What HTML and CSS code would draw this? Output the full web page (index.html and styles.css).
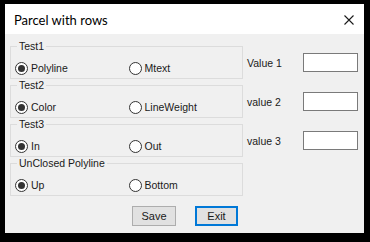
FILE: index.html
```html
<!DOCTYPE html>
<html lang="en">
<head>
    <meta charset="UTF-8">
    <title>Parcel with rows</title>
    <link rel="stylesheet" href="styles.css">
</head>
<body>
    <div class="window">
        <div class="titlebar">
            <span class="title">Parcel with rows</span>
            <svg class="close" width="10" height="10" viewBox="0 0 10 10">
                <path d="M0.5 0.5 L9.5 9.5 M9.5 0.5 L0.5 9.5" stroke="#1a1a1a" stroke-width="1.1" fill="none"/>
            </svg>
        </div>

        <div class="content">
            <div class="main">
                <div class="groups">
                    <fieldset class="group">
                        <legend>Test1</legend>
                        <div class="options">
                            <label class="option"><input type="radio" name="g1" checked>Polyline</label>
                            <label class="option"><input type="radio" name="g1">Mtext</label>
                        </div>
                    </fieldset>
                    <fieldset class="group">
                        <legend>Test2</legend>
                        <div class="options">
                            <label class="option"><input type="radio" name="g2" checked>Color</label>
                            <label class="option"><input type="radio" name="g2">LineWeight</label>
                        </div>
                    </fieldset>
                    <fieldset class="group">
                        <legend>Test3</legend>
                        <div class="options">
                            <label class="option"><input type="radio" name="g3" checked>In</label>
                            <label class="option"><input type="radio" name="g3">Out</label>
                        </div>
                    </fieldset>
                    <fieldset class="group">
                        <legend>UnClosed Polyline</legend>
                        <div class="options">
                            <label class="option"><input type="radio" name="g4" checked>Up</label>
                            <label class="option"><input type="radio" name="g4">Bottom</label>
                        </div>
                    </fieldset>
                </div>

                <div class="values">
                    <div class="value-row">
                        <span class="value-label">Value 1</span>
                        <input class="textbox" type="text">
                    </div>
                    <div class="value-row">
                        <span class="value-label">value 2</span>
                        <input class="textbox" type="text">
                    </div>
                    <div class="value-row">
                        <span class="value-label">value 3</span>
                        <input class="textbox" type="text">
                    </div>
                </div>
            </div>

            <div class="buttons">
                <button class="btn">Save</button>
                <button class="btn btn-focus">Exit</button>
            </div>
        </div>
    </div>
</body>
</html>
```

FILE: styles.css
```css
body {
    margin: 0;
    padding: 4px 0 0 5px;
    background: #000;
    font-family: 'Liberation Sans', Arial, sans-serif;
    font-size: 10.5px;
    color: #1a1a1a;
    height: 242px;
    box-sizing: border-box;
    overflow: hidden;
}

.window {
    width: 359px;
    height: 229px;
    background: #f0f0f0;
    display: flex;
    flex-direction: column;
}

.titlebar {
    height: 30px;
    background: #fff;
    display: flex;
    align-items: center;
    justify-content: space-between;
    padding: 0 10px 0 9px;
    box-sizing: border-box;
}

.title {
    font-family: Lato, 'Noto Sans', sans-serif;
    font-size: 13px;
    color: #000;
    margin-top: 1px;
}

.close {
    display: block;
    margin-top: 2px;
}

.content {
    padding: 6px 6px 0 5px;
}

.main {
    display: flex;
}

.groups {
    width: 233px;
    display: flex;
    flex-direction: column;
}

.group {
    margin: 0;
    padding: 8px 0 3px 4px;
    border: 1px solid #dcdcdc;
    min-width: 0;
}

.group legend {
    margin-left: 2px;
    padding: 0 2px;
    line-height: 13px;
}

.options {
    display: flex;
    height: 14px;
    align-items: center;
}

.option {
    display: flex;
    align-items: center;
    gap: 3px;
    width: 115px;
}

.option input {
    appearance: none;
    margin: 0;
    width: 13px;
    height: 13px;
    border: 1px solid #333;
    border-radius: 50%;
    background: #fff;
    display: flex;
    align-items: center;
    justify-content: center;
    box-sizing: border-box;
}

.option input:checked::after {
    content: "";
    width: 7px;
    height: 7px;
    border-radius: 50%;
    background: #333;
}

.values {
    display: flex;
    flex-direction: column;
    gap: 20px;
    margin: 13px 0 0 4px;
}

.value-row {
    display: flex;
    align-items: center;
    height: 19px;
}

.value-label {
    width: 56px;
}

.textbox {
    width: 55px;
    height: 19px;
    margin: 0;
    padding: 0;
    border: 1px solid #7a7a7a;
    background: #fff;
    box-sizing: border-box;
}

.buttons {
    display: flex;
    gap: 19px;
    margin: 10px 0 0 122px;
}

.btn {
    width: 44px;
    height: 20px;
    margin: 0;
    padding: 0;
    font-family: inherit;
    font-size: 11px;
    color: #1a1a1a;
    background: #e1e1e1;
    border: 1px solid #adadad;
    box-sizing: border-box;
}

.btn-focus {
    width: 43px;
    border: 2px solid #0078d7;
}
```
